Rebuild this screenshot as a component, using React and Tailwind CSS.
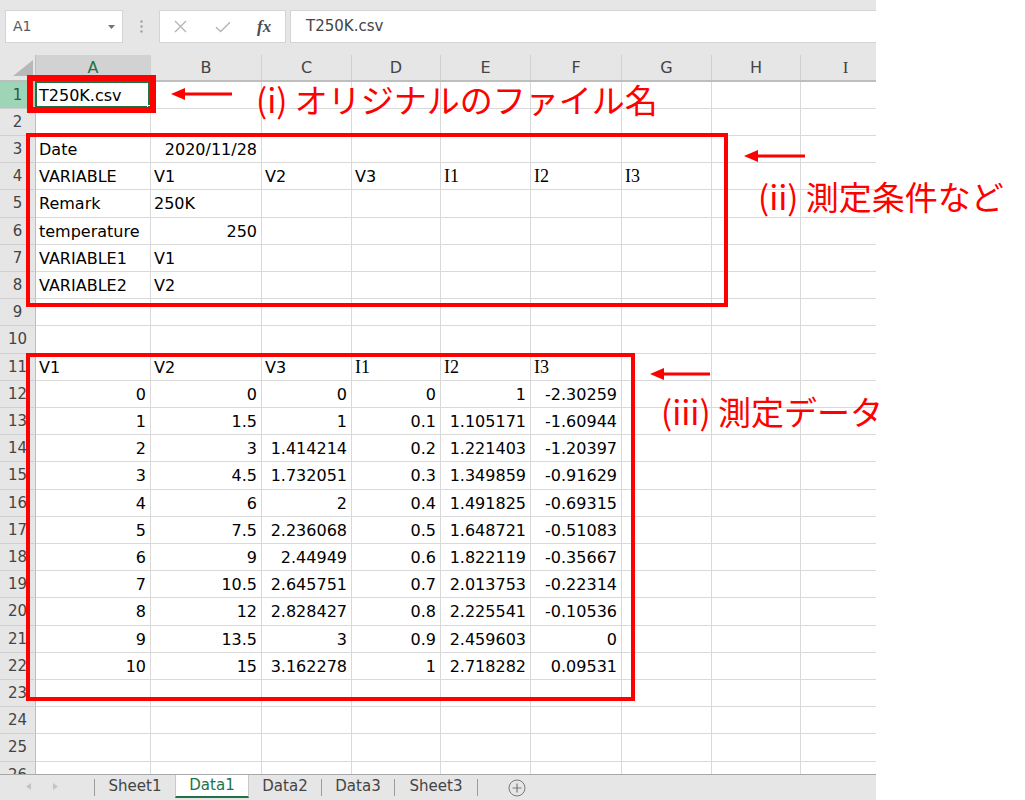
import React from "react";

const COLS = [
  { key: "A", w: "w-[115px]" },
  { key: "B", w: "w-[111px]" },
  { key: "C", w: "w-[90px]" },
  { key: "D", w: "w-[89px]" },
  { key: "E", w: "w-[90px]" },
  { key: "F", w: "w-[91px]" },
  { key: "G", w: "w-[90px]" },
  { key: "H", w: "w-[89px]" },
  { key: "I", w: "w-[90px]" },
];

const t = (v) => ({ v, a: "l" });
const s = (v) => ({ v, a: "l", serif: true });
const n = (v) => ({ v, a: "r" });

const numRows = [
  ["0", "0", "0", "0", "1", "-2.30259"],
  ["1", "1.5", "1", "0.1", "1.105171", "-1.60944"],
  ["2", "3", "1.414214", "0.2", "1.221403", "-1.20397"],
  ["3", "4.5", "1.732051", "0.3", "1.349859", "-0.91629"],
  ["4", "6", "2", "0.4", "1.491825", "-0.69315"],
  ["5", "7.5", "2.236068", "0.5", "1.648721", "-0.51083"],
  ["6", "9", "2.44949", "0.6", "1.822119", "-0.35667"],
  ["7", "10.5", "2.645751", "0.7", "2.013753", "-0.22314"],
  ["8", "12", "2.828427", "0.8", "2.225541", "-0.10536"],
  ["9", "13.5", "3", "0.9", "2.459603", "0"],
  ["10", "15", "3.162278", "1", "2.718282", "0.09531"],
];

const ROWS = [
  [{ v: "T250K.csv", a: "l", sel: true }],
  [],
  [t("Date"), n("2020/11/28")],
  [t("VARIABLE"), t("V1"), t("V2"), t("V3"), s("I1"), s("I2"), s("I3")],
  [t("Remark"), t("250K")],
  [t("temperature"), n("250")],
  [t("VARIABLE1"), t("V1")],
  [t("VARIABLE2"), t("V2")],
  [],
  [],
  [t("V1"), t("V2"), t("V3"), s("I1"), s("I2"), s("I3")],
  ...numRows.map((r) => r.map(n)),
  [],
  [],
  [],
  [],
];

function TopBar() {
  return (
    <div className="h-[55px] shrink-0 flex items-start pt-[10px]">
      <div className="ml-[5px] w-[118px] h-[33px] bg-white border border-[#d4d4d4] flex items-center justify-between pl-[7px] pr-[7px]">
        <span className="text-[14px] text-[#5a5a5a]">A1</span>
        <svg width="7" height="4" viewBox="0 0 7 4">
          <path d="M0 0H7L3.5 4Z" fill="#737373" />
        </svg>
      </div>
      <div className="w-[36px] h-[33px] flex items-center justify-center">
        <svg width="3" height="13" viewBox="0 0 3 13">
          <circle cx="1.5" cy="1.5" r="1.2" fill="#a3a3a3" />
          <circle cx="1.5" cy="6.5" r="1.2" fill="#a3a3a3" />
          <circle cx="1.5" cy="11.5" r="1.2" fill="#a3a3a3" />
        </svg>
      </div>
      <div className="w-[127px] h-[33px] bg-white border border-[#d4d4d4] flex items-center">
        <div className="w-[42px] flex justify-center">
          <svg width="13" height="13" viewBox="0 0 13 13">
            <path d="M1 1L12 12M12 1L1 12" stroke="#b4b4b4" strokeWidth="1.3" fill="none" />
          </svg>
        </div>
        <div className="w-[42px] flex justify-center">
          <svg width="16" height="12" viewBox="0 0 16 12">
            <path d="M1 6.2L5.6 10.6L15 1.2" stroke="#b4b4b4" strokeWidth="1.4" fill="none" />
          </svg>
        </div>
        <div className="w-[42px] flex justify-center">
          <span className="font-['Liberation_Serif',serif] italic font-bold text-[17px] leading-none text-[#4d4d4d]">
            fx
          </span>
        </div>
      </div>
      <div className="ml-[4px] flex-1 h-[33px] bg-white border border-r-0 border-[#d4d4d4] flex items-center pl-[15px]">
        <span className="text-[15px] text-[#444444]">T250K.csv</span>
      </div>
    </div>
  );
}

function HeaderRow() {
  return (
    <div className="h-[27px] flex bg-[#e6e6e6] border-b-2 border-[#bebebe]">
      <div className="w-[36px] shrink-0 relative border-r border-[#bebebe]">
        <svg className="absolute left-[13px] top-[5px]" width="20" height="16" viewBox="0 0 20 16">
          <path d="M20 0V16H0Z" fill="#b8b8b8" />
        </svg>
      </div>
      {COLS.map((c) => (
        <div
          key={c.key}
          className={`${c.w} shrink-0 flex items-center justify-center border-r border-[#d0d0d0] ${
            c.key === "A" ? "bg-[#d2d2d2] text-[#217346]" : "text-[#444444]"
          }`}
        >
          {c.key === "I" ? (
            <span className="font-['Liberation_Serif',serif] text-[17px] leading-[19px]">I</span>
          ) : (
            <span className="text-[16px] leading-[19px]">{c.key}</span>
          )}
        </div>
      ))}
    </div>
  );
}

function Cell({ col, cell, h }) {
  const align = cell && cell.a === "r" ? "justify-end pr-[4px]" : "justify-start pl-[3px]";
  return (
    <div
      className={`${col.w} ${h} shrink-0 relative flex items-center border-r border-b border-[#d9d9d9] ${align}`}
    >
      {cell && cell.sel && (
        <>
          <div className="absolute -left-[1px] -top-[1px] -right-[0px] -bottom-[0px] border-2 border-[#217346]" />
          <div className="absolute -right-[3px] -bottom-[3px] w-[6px] h-[6px] bg-[#217346] border border-white" />
        </>
      )}
      {cell &&
        (cell.serif ? (
          <span className="font-['Liberation_Serif',serif] text-[18px] leading-[19px] whitespace-nowrap text-black">
            {cell.v}
          </span>
        ) : (
          <span className="text-[16px] leading-[19px] whitespace-nowrap text-black">{cell.v}</span>
        ))}
    </div>
  );
}

function Grid() {
  return (
    <div className="flex-1 overflow-hidden bg-white">
      <HeaderRow />
      {ROWS.map((row, i) => {
        const h = i % 5 === 4 ? "h-[28px]" : "h-[27px]";
        const selected = i === 0;
        return (
          <div key={i} className="flex">
            <div
              className={`w-[36px] ${h} shrink-0 flex items-center justify-center border-r border-b border-r-[#bebebe] border-b-[#d0d0d0] ${
                selected ? "bg-[#9fd5b7] text-[#2b5b41]" : "bg-[#e6e6e6] text-[#444444]"
              }`}
            >
              <span className="text-[15px] leading-[19px]">{i + 1}</span>
            </div>
            {COLS.map((c, j) => (
              <Cell key={c.key} col={c} cell={row[j]} h={h} />
            ))}
          </div>
        );
      })}
    </div>
  );
}

function Sep() {
  return <div className="w-px h-[17px] mt-[4px] bg-[#9c9c9c] shrink-0" />;
}

function Tabs() {
  return (
    <div className="h-[26px] shrink-0 border-t border-[#a8a8a8] bg-[#e6e6e6] flex items-start text-[15px] text-[#444444]">
      <div className="w-[94px] h-[22px] shrink-0 flex items-center pl-[26px] gap-[22px]">
        <svg width="5" height="7" viewBox="0 0 5 7">
          <path d="M5 0L0 3.5L5 7Z" fill="#c4c4c4" />
        </svg>
        <svg width="5" height="7" viewBox="0 0 5 7">
          <path d="M0 0L5 3.5L0 7Z" fill="#c4c4c4" />
        </svg>
      </div>
      <Sep />
      <div className="w-[80px] h-[22px] shrink-0 flex items-center justify-center">Sheet1</div>
      <div className="w-[74px] h-[23px] shrink-0 flex items-center justify-center bg-white border-x border-[#c8c8c8] border-b-2 border-b-[#217346] text-[#217346]">
        Data1
      </div>
      <div className="w-[72px] h-[22px] shrink-0 flex items-center justify-center">Data2</div>
      <Sep />
      <div className="w-[72px] h-[22px] shrink-0 flex items-center justify-center">Data3</div>
      <Sep />
      <div className="w-[82px] h-[22px] shrink-0 flex items-center justify-center">Sheet3</div>
      <Sep />
      <div className="ml-[30px] mt-[4px] shrink-0">
        <svg width="18" height="18" viewBox="0 0 18 18">
          <circle cx="9" cy="9" r="8" stroke="#7a7a7a" strokeWidth="1" fill="none" />
          <path d="M9 4.5V13.5M4.5 9H13.5" stroke="#7a7a7a" strokeWidth="1.2" />
        </svg>
      </div>
    </div>
  );
}

function Arrow({ className, width }) {
  return (
    <svg className={className} width={width} height="12" viewBox={`0 0 ${width} 12`}>
      <path d={`M12 6H${width}`} stroke="#ff0000" strokeWidth="3" />
      <path d="M0 6L14 0V12Z" fill="#ff0000" />
    </svg>
  );
}

function Overlays() {
  const label =
    "absolute text-[33px] leading-none text-[#ff0000] font-['Noto_Sans_CJK_JP',sans-serif] whitespace-nowrap";
  return (
    <>
      <div className="absolute left-[27px] top-[75px] w-[129px] h-[38px] border-[6px] border-[#ff0000]" />
      <div className="absolute left-[26px] top-[133px] w-[702px] h-[174px] border-[4px] border-[#ff0000]" />
      <div className="absolute left-[26px] top-[353px] w-[609px] h-[348px] border-[4px] border-[#ff0000]" />

      <Arrow className="absolute left-[171px] top-[88px]" width={61} />
      <Arrow className="absolute left-[744px] top-[150px]" width={61} />
      <Arrow className="absolute left-[650px] top-[368px]" width={60} />

      <div className={`${label} left-[256px] top-[83px]`}>(i) オリジナルのファイル名</div>
      <div className={`${label} left-[758px] top-[180px]`}>(ii) 測定条件など</div>
      <div className={`${label} left-[661px] top-[395px]`}>(iii) 測定データ</div>
    </>
  );
}

export default function App() {
  return (
    <div className="relative w-[1025px] h-[800px] bg-white overflow-hidden font-['DejaVu_Sans',sans-serif]">
      <div className="w-[876px] h-[800px] flex flex-col bg-[#e6e6e6]">
        <TopBar />
        <Grid />
        <Tabs />
      </div>
      <Overlays />
    </div>
  );
}
